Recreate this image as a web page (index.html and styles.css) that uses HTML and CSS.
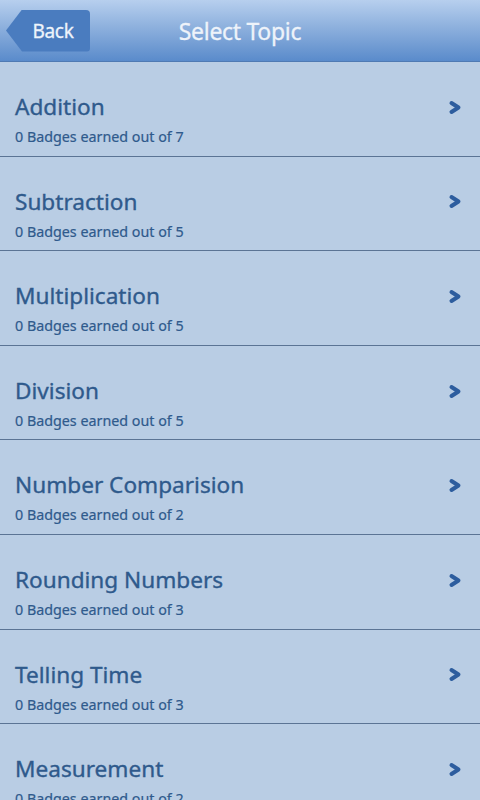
FILE: index.html
```html
<!DOCTYPE html>
<html>
<head>
<meta charset="utf-8">
<link rel="stylesheet" href="styles.css">
</head>
<body>
<header class="bar">
  <div class="back"><span>Back</span></div>
  <h1 class="title">Select Topic</h1>
</header>
<ul class="list">
  <li class="row"><div class="text"><div class="name">Addition</div><div class="sub">0 Badges earned out of 7</div></div><svg class="chev" viewBox="0 0 14 15"><path d="M3.5 3 L10.5 7.5 L3.5 12" fill="none" stroke="#2d5d9e" stroke-width="4" stroke-linecap="round" stroke-linejoin="round"/></svg></li>
  <li class="row"><div class="text"><div class="name">Subtraction</div><div class="sub">0 Badges earned out of 5</div></div><svg class="chev" viewBox="0 0 14 15"><path d="M3.5 3 L10.5 7.5 L3.5 12" fill="none" stroke="#2d5d9e" stroke-width="4" stroke-linecap="round" stroke-linejoin="round"/></svg></li>
  <li class="row"><div class="text"><div class="name">Multiplication</div><div class="sub">0 Badges earned out of 5</div></div><svg class="chev" viewBox="0 0 14 15"><path d="M3.5 3 L10.5 7.5 L3.5 12" fill="none" stroke="#2d5d9e" stroke-width="4" stroke-linecap="round" stroke-linejoin="round"/></svg></li>
  <li class="row"><div class="text"><div class="name">Division</div><div class="sub">0 Badges earned out of 5</div></div><svg class="chev" viewBox="0 0 14 15"><path d="M3.5 3 L10.5 7.5 L3.5 12" fill="none" stroke="#2d5d9e" stroke-width="4" stroke-linecap="round" stroke-linejoin="round"/></svg></li>
  <li class="row"><div class="text"><div class="name">Number Comparision</div><div class="sub">0 Badges earned out of 2</div></div><svg class="chev" viewBox="0 0 14 15"><path d="M3.5 3 L10.5 7.5 L3.5 12" fill="none" stroke="#2d5d9e" stroke-width="4" stroke-linecap="round" stroke-linejoin="round"/></svg></li>
  <li class="row"><div class="text"><div class="name">Rounding Numbers</div><div class="sub">0 Badges earned out of 3</div></div><svg class="chev" viewBox="0 0 14 15"><path d="M3.5 3 L10.5 7.5 L3.5 12" fill="none" stroke="#2d5d9e" stroke-width="4" stroke-linecap="round" stroke-linejoin="round"/></svg></li>
  <li class="row"><div class="text"><div class="name">Telling Time</div><div class="sub">0 Badges earned out of 3</div></div><svg class="chev" viewBox="0 0 14 15"><path d="M3.5 3 L10.5 7.5 L3.5 12" fill="none" stroke="#2d5d9e" stroke-width="4" stroke-linecap="round" stroke-linejoin="round"/></svg></li>
  <li class="row"><div class="text"><div class="name">Measurement</div><div class="sub">0 Badges earned out of 2</div></div><svg class="chev" viewBox="0 0 14 15"><path d="M3.5 3 L10.5 7.5 L3.5 12" fill="none" stroke="#2d5d9e" stroke-width="4" stroke-linecap="round" stroke-linejoin="round"/></svg></li>
</ul>
</body>
</html>
```
FILE: styles.css
```css
* { box-sizing: border-box; }
html, body { margin: 0; padding: 0; }
body {
  width: 480px;
  height: 800px;
  overflow: hidden;
  background: #b9cde4;
  font-family: "Noto Sans", "Open Sans", sans-serif;
}
.bar {
  height: 62px;
  display: flex;
  align-items: center;
  position: relative;
  background: linear-gradient(to bottom, #b7cfee 0%, #8db0dd 45%, #5a8bcb 100%);
  border-bottom: 1px solid #4f7ab3;
}
.back {
  margin-left: 6px;
  width: 84px;
  height: 42px;
  background: #4a7cbf;
  clip-path: polygon(16px 0, 100% 0, 100% 100%, 16px 100%, 0 50%);
  border-radius: 0 4px 4px 0;
  display: flex;
  align-items: center;
  justify-content: center;
  padding-left: 10px;
}
.back span {
  color: #eef4fb;
  font-size: 19px;
  letter-spacing: -0.3px;
  -webkit-text-stroke: 0.3px #eef4fb;
}
.title {
  position: absolute;
  left: 0;
  right: 0;
  top: 0;
  margin: 0;
  line-height: 62px;
  text-align: center;
  color: #eef3fa;
  font-size: 23px;
  font-weight: normal;
  letter-spacing: -0.3px;
  -webkit-text-stroke: 0.3px #eef3fa;
}
.list {
  list-style: none;
  margin: 0;
  padding: 0;
}
.row {
  height: 94.6px;
  display: flex;
  align-items: flex-start;
  justify-content: space-between;
  padding: 31px 18px 0 15px;
  border-bottom: 1px solid #5b7494;
}
.name {
  color: #2f5a8c;
  font-size: 22.6px;
  line-height: 28px;
  -webkit-text-stroke: 0.35px #2f5a8c;
}
.sub {
  color: #2f5a8c;
  font-size: 14.3px;
  line-height: 20px;
  margin-top: 6px;
  -webkit-text-stroke: 0.2px #2f5a8c;
}
.chev {
  width: 14px;
  height: 15px;
  align-self: center;
  margin-top: -34px;
}
```
